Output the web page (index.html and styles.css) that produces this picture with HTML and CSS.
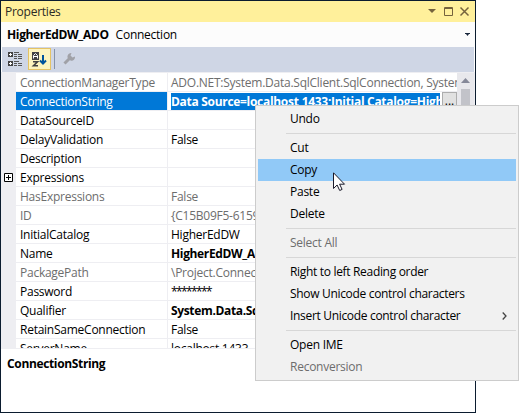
FILE: index.html
```html
<!DOCTYPE html>
<html lang="en">
<head>
<meta charset="utf-8">
<title>Properties</title>
<link rel="stylesheet" href="styles.css">
</head>
<body>
<section class="window">
  <header class="title-bar">
    <span class="title">Properties</span>
    <svg class="window-buttons" width="50" height="21" viewBox="0 0 50 21" fill="none" stroke="#75633d">
      <path d="M3 8h8L7 12z" fill="#75633d" stroke="none"/>
      <path d="M19.5 6.5h8v8h-8z"/><path d="M19 7.5h9" />
      <path d="M35.500 6.500l8 8M43.500 6.500l-8 8" stroke-width="1.500"/>
    </svg>
  </header>
  <div class="object-bar">
    <span><b class="object-name">HigherEdDW_ADO</b><span class="object-type">Connection</span></span>
    <svg width="6" height="4"><path d="M0 0h5v1H4L2.5 3 1 1H0z" fill="#1b293e"/></svg>
  </div>
  <div class="toolbar">
    <svg class="category-icon" width="15" height="15" viewBox="0 0 15 15">
      <path d="M0 0h5v5H0zM0 9h5v5H0z" fill="#424242"/>
      <path d="M1 2.5h3M2.5 1v3M1 11.500h3M2.500 10v3" stroke="#fff"/>
      <path d="M6 .5h5M6 2.500h3M10 2.500h4M6 4.500h3M10 4.500h4M6 6.500h3M10 6.500h4M6 9.500h5M6 11.500h3M10 11.500h4M6 13.500h3M10 13.500h4" stroke="#555"/>
    </svg>
    <span class="sort-button">
      <svg width="22" height="21" viewBox="0 0 22 21">
        <path d="M3 3h7v8H3z" fill="#424242"/>
        <path d="M4.500 9.500V6.500L6.500 4.500l2 2v3M4.500 7.500h4" fill="none" stroke="#fff"/>
        <path d="M4 12.800h4.500L4.500 16.700H9" fill="none" stroke="#424242" stroke-width="1.600"/>
        <path d="M14 6v9M11 11.500l3 3 3-3" fill="none" stroke="#00539c" stroke-width="2"/>
      </svg>
    </span>
    <span class="tool-divider"></span>
    <svg class="wrench" width="12" height="12" viewBox="0 0 12 12"><path d="M1.500 10.500L7 5" stroke="#a0a1a7" stroke-width="3"/><path d="M8.500 0L7.500 2.500l2 2L12 3.500c.2 3-2 4.800-4.500 4L4.500 4.500C4 2 6 0 8.500 0z" fill="#a0a1a7"/></svg>
  </div>
  <div class="grid-area">
    <div class="gutter"><svg width="9" height="9"><path d="M.5.5h8v8h-8z" fill="#fff" stroke="#000"/><path d="M2 4.500h5M4.500 2v5" stroke="#000"/></svg></div>
    <div class="properties">
      <div class="row muted"><span class="name">ConnectionManagerType</span><span class="value">ADO.NET:System.Data.SqlClient.SqlConnection, System</span></div>
      <div class="row selected"><span class="name">ConnectionString</span><span class="value"><b class="selection">Data Source=localhost,1433;Initial Catalog=HigherEdDW</b><span class="browse">...</span></span></div>
      <div class="row"><span class="name">DataSourceID</span><span class="value"></span></div>
      <div class="row"><span class="name">DelayValidation</span><span class="value">False</span></div>
      <div class="row"><span class="name">Description</span><span class="value"></span></div>
      <div class="row"><span class="name">Expressions</span><span class="value"></span></div>
      <div class="row muted"><span class="name">HasExpressions</span><span class="value">False</span></div>
      <div class="row muted"><span class="name">ID</span><span class="value">{C15B09F5-6159</span></div>
      <div class="row"><span class="name">InitialCatalog</span><span class="value">HigherEdDW</span></div>
      <div class="row"><span class="name">Name</span><b class="value">HigherEdDW_ADO</b></div>
      <div class="row muted"><span class="name">PackagePath</span><span class="value">\Project.Connec</span></div>
      <div class="row"><span class="name">Password</span><span class="value stars">********</span></div>
      <div class="row"><span class="name">Qualifier</span><b class="value">System.Data.Sql</b></div>
      <div class="row"><span class="name">RetainSameConnection</span><span class="value">False</span></div>
      <div class="row"><span class="name">ServerName</span><span class="value">localhost,1433</span></div>
    </div>
    <div class="scrollbar"><svg width="9" height="5"><path d="M0 5L4.500 0 9 5z" fill="#868999"/></svg><span class="thumb"></span></div>
  </div>
  <div class="description"><b>ConnectionString</b></div>
</section>

<nav class="menu">
  <div class="item">Undo</div>
  <div class="separator"></div>
  <div class="item">Cut</div>
  <div class="item active">Copy</div>
  <div class="item">Paste</div>
  <div class="item">Delete</div>
  <div class="separator"></div>
  <div class="item disabled">Select All</div>
  <div class="separator"></div>
  <div class="item long">Right to left Reading order</div>
  <div class="item long">Show Unicode control characters</div>
  <div class="item long">Insert Unicode control character<svg width="5" height="8"><path d="M.7.500L4 4 .7 7.500" fill="none" stroke="#444" stroke-width="1.300"/></svg></div>
  <div class="separator"></div>
  <div class="item">Open IME</div>
  <div class="item disabled">Reconversion</div>
</nav>
<svg class="cursor" width="13" height="20" viewBox="0 0 13 20"><path d="M.5.8v15.700l3.600-3.500 2.600 5.500 2.400-1.100-2.500-5.200h4.900z" fill="#fff" stroke="#1a1a2a"/></svg>
</body>
</html>
```
FILE: styles.css
```css
* { box-sizing: border-box; }
body {
  margin: 0;
  width: 519px;
  height: 413px;
  overflow: hidden;
  position: relative;
  background: #fff;
  color: #000;
  font: 12px/18px "Open Sans", "Noto Sans", sans-serif;
  letter-spacing: -0.25px;
  white-space: nowrap;
}
svg { display: block; flex: none; }
b { font-weight: 700; letter-spacing: -0.35px; }
.window {
  width: 476px;
  height: 413px;
  border: 1px solid #0b1c2f;
  display: flex;
  flex-direction: column;
}
.title-bar {
  height: 21px;
  background: #fff09b;
  padding-left: 4px;
  display: flex;
  justify-content: space-between;
  line-height: 22px;
  color: #2b2a24;
}
.object-bar {
  height: 25px;
  background: #fcfcfc;
  padding: 0 4px 0 6px;
  display: flex;
  justify-content: space-between;
  align-items: center;
  line-height: 24px;
}
.object-type { margin-left: 7px; }
.toolbar {
  height: 25px;
  margin: 0 1px;
  background: #cfd6e5;
  display: flex;
  align-items: flex-start;
}
.category-icon { margin: 5px 5px 0 6px; }
.sort-button {
  width: 23px;
  height: 22px;
  margin-top: 1px;
  border: 1px solid #e5c365;
  background: #fdf4bf;
}
.tool-divider { width: 1px; height: 20px; margin: 2px 8px 0 3px; background: #8591a8; }
.wrench { margin-top: 6px; }
.grid-area {
  height: 277px;
  padding-top: 1px;
  background: #eeeef2;
  display: flex;
  overflow: hidden;
}
.gutter { width: 15px; padding: 100px 0 0 3px; }
.properties {
  width: 441px;
  height: 275px;
  overflow: hidden;
}
.row {
  height: 19px;
  border-bottom: 1px solid #eeeef2;
  background: #fff;
  display: flex;
  line-height: 20px;
}
.name { width: 151px; padding-left: 4px; }
.value { width: 290px; padding-left: 3px; border-left: 1px solid #eeeef2; overflow: hidden; }
.muted { color: #6d6d6d; }
.stars { letter-spacing: -1.600px; }
.selected .name { background: #0078d7; color: #fff; }
.selected .value { display: flex; justify-content: space-between; }
.selection {
  width: 269px;
  height: 17px;
  margin-top: 1px;
  overflow: hidden;
  background: #0078d7;
  color: #fff;
  line-height: 18px;
  letter-spacing: -0.3px;
}
.browse {
  width: 15px;
  height: 18px;
  border: 1px solid #adadad;
  background: #e1e1e1;
  line-height: 15px;
  text-align: center;
  letter-spacing: 0;
}
.scrollbar {
  width: 17px;
  padding: 5px 4px 0;
  background: #e8e8ec;
}
.thumb { display: block; width: 9px; height: 200px; margin-top: 6px; background: #c2c3c9; }
.description { flex: 1; padding: 6px 6px; background: #fff; }
.menu {
  position: absolute;
  left: 255px;
  top: 105px;
  width: 264px;
  height: 276px;
  padding: 2px;
  border: 1px solid #ccc;
  background: #f1f1f1;
}
.item {
  height: 22px;
  padding: 0 9px 0 32px;
  display: flex;
  align-items: center;
  justify-content: space-between;
}
.long { letter-spacing: -0.32px; }
.active { background: #91c9f7; }
.disabled { color: #6d6d6d; }
.separator { height: 1px; margin: 3px 0 3px 28px; background: #d7d7d7; }
.cursor { position: absolute; left: 333px; top: 172px; }
```
